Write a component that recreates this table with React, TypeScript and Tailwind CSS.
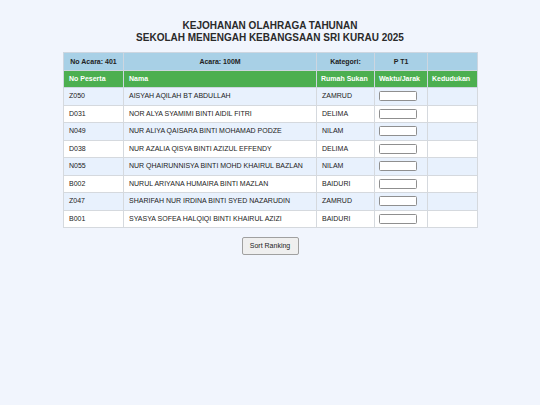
import React from "react";

const rows = [
  ["Z050", "AISYAH AQILAH BT ABDULLAH", "ZAMRUD"],
  ["D031", "NOR ALYA SYAMIMI BINTI AIDIL FITRI", "DELIMA"],
  ["N049", "NUR ALIYA QAISARA BINTI MOHAMAD PODZE", "NILAM"],
  ["D038", "NUR AZALIA QISYA BINTI AZIZUL EFFENDY", "DELIMA"],
  ["N055", "NUR QHAIRUNNISYA BINTI MOHD KHAIRUL BAZLAN", "NILAM"],
  ["B002", "NURUL ARIYANA HUMAIRA BINTI MAZLAN", "BAIDURI"],
  ["Z047", "SHARIFAH NUR IRDINA BINTI SYED NAZARUDIN", "ZAMRUD"],
  ["B001", "SYASYA SOFEA HALQIQI BINTI KHAIRUL AZIZI", "BAIDURI"],
];

export default function App() {
  return (
    <div
      className="min-h-[405px] w-full bg-[#f1f5fd] text-[#222]"
      style={{ fontFamily: '"Liberation Sans", Arial, sans-serif' }}
    >
      <div className="pt-[20px] text-center text-[10px] font-bold leading-[12px] text-[#2a2a2a]">
        <div>KEJOHANAN OLAHRAGA TAHUNAN</div>
        <div>SEKOLAH MENENGAH KEBANGSAAN SRI KURAU 2025</div>
      </div>
      <div className="mx-auto mt-[8px] w-[414px]">
        <table className="w-[414px] table-fixed border-collapse text-[7px] leading-[8px]">
          <colgroup>
            <col className="w-[60px]" />
            <col className="w-[193px]" />
            <col className="w-[58px]" />
            <col className="w-[53px]" />
            <col className="w-[50px]" />
          </colgroup>
          <thead>
            <tr className="h-[18px] bg-[#a8d0e6] font-bold text-[#222]">
              <th className="border border-[#cdd6e0] px-[5px] text-center">No Acara: 401</th>
              <th className="border border-[#cdd6e0] px-[5px] text-center">Acara: 100M</th>
              <th className="border border-[#cdd6e0] px-[5px] text-center">Kategori:</th>
              <th className="border border-[#cdd6e0] px-[5px] text-center">P T1</th>
              <th className="border border-[#cdd6e0] px-[5px]"></th>
            </tr>
            <tr className="h-[17px] bg-[#4caf50] font-bold text-white">
              <th className="border border-[#cdd6e0] px-[5px] text-left">No Peserta</th>
              <th className="border border-[#cdd6e0] px-[5px] text-left">Nama</th>
              <th className="border border-[#cdd6e0] px-[4px] text-left">Rumah Sukan</th>
              <th className="border border-[#cdd6e0] px-[4px] text-left">Waktu/Jarak</th>
              <th className="border border-[#cdd6e0] px-[4px] text-left">Kedudukan</th>
            </tr>
          </thead>
          <tbody>
            {rows.map((r, i) => (
              <tr
                key={r[0]}
                className={`h-[17.5px] ${i % 2 === 0 ? "bg-[#e8f1fd]" : "bg-white"}`}
              >
                <td className="border border-[#d5d9de] px-[5px]">{r[0]}</td>
                <td className="border border-[#d5d9de] px-[5px]">{r[1]}</td>
                <td className="border border-[#d5d9de] px-[5px]">{r[2]}</td>
                <td className="border border-[#d5d9de] px-[4px]">
                  <input
                    type="text"
                    className="block h-[10px] w-[38px] rounded-[1.5px] border border-[#8f8f8f] bg-white p-0 text-[7px]"
                  />
                </td>
                <td className="border border-[#d5d9de] px-[5px]"></td>
              </tr>
            ))}
          </tbody>
        </table>
        <div className="mt-[9px] flex justify-center">
          <button className="h-[18px] w-[57px] rounded-[2px] border border-[#a0a0a0] bg-[#efefef] text-[7px] text-[#222]">
            Sort Ranking
          </button>
        </div>
      </div>
    </div>
  );
}
